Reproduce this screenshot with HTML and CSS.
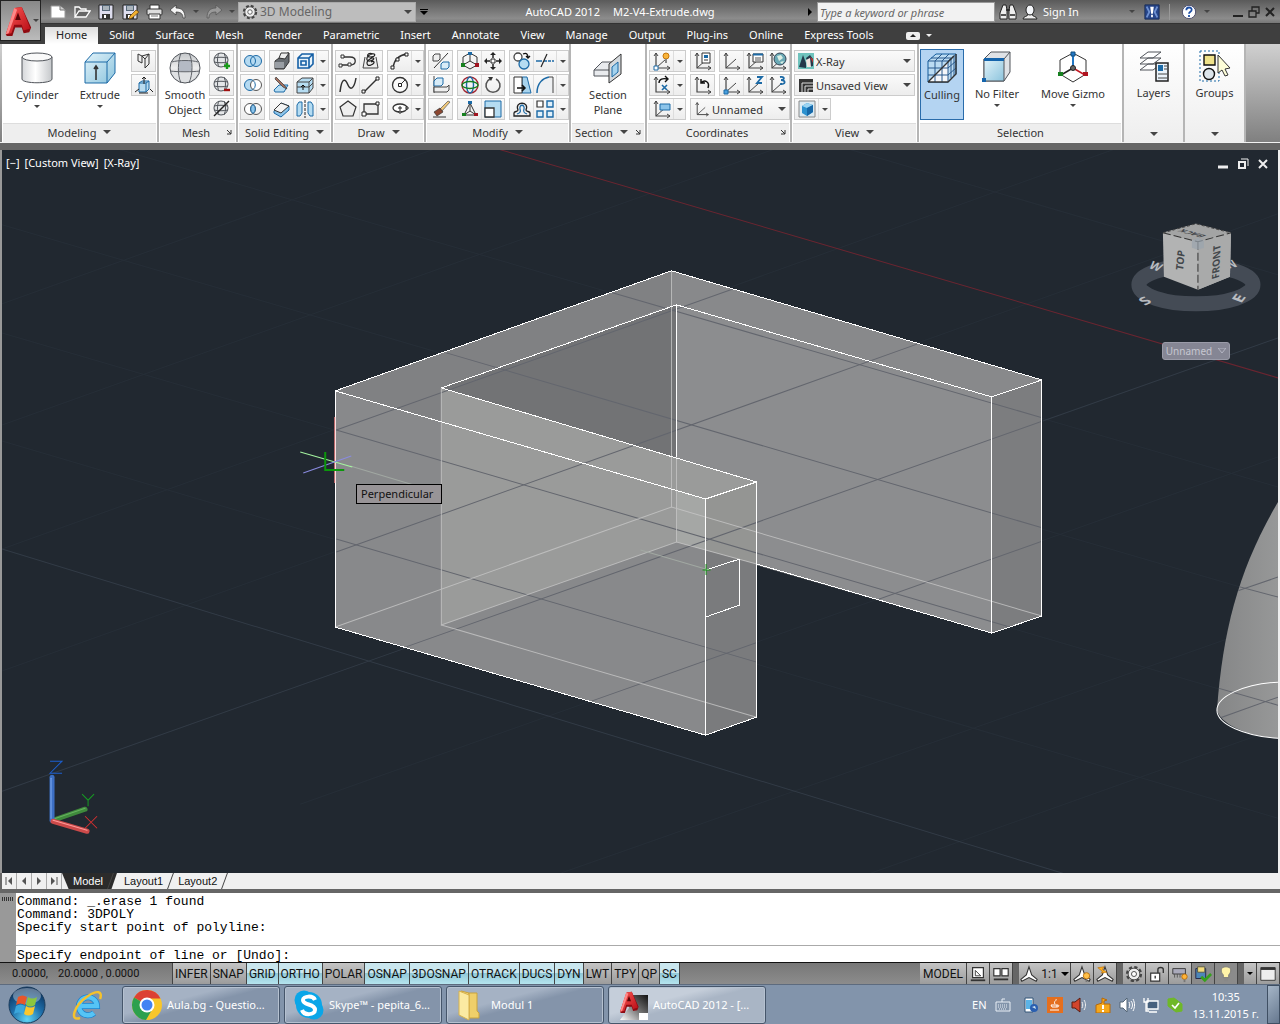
FILE: index.html
```html
<!DOCTYPE html>
<html lang="en">
<head>
    <meta charset="utf-8">
    <title>AutoCAD 2012</title>
    <link rel="stylesheet" href="styles.css">
</head>
<body>
<svg class="sprite" aria-hidden="true">
    <defs>
        <linearGradient id="g-metal" x1="0" x2="1"><stop offset="0" stop-color="#d5d7da"/><stop offset=".45" stop-color="#fff"/><stop offset="1" stop-color="#c4c7ca"/></linearGradient>
        <linearGradient id="g-sky" x1="0" y1="0" x2="1" y2="1"><stop offset="0" stop-color="#e2f3fa"/><stop offset="1" stop-color="#8cc4dd"/></linearGradient>
        <linearGradient id="g-ball" x1="0" y1="0" x2="0" y2="1"><stop offset="0" stop-color="#c4c7ca"/><stop offset=".5" stop-color="#eee"/><stop offset="1" stop-color="#b4b7ba"/></linearGradient>
        <radialGradient id="g-orb" cx=".5" cy=".9" r=".9"><stop offset="0" stop-color="#5fd5f5"/><stop offset=".5" stop-color="#1d6da8"/><stop offset="1" stop-color="#0b2c55"/></radialGradient>
        <linearGradient id="g-red" x1="0" y1="0" x2="1" y2="1"><stop offset="0" stop-color="#ff5a55"/><stop offset="1" stop-color="#b50a14"/></linearGradient>
        <linearGradient id="g-chrome" x1="0" y1="1" x2="1" y2="0"><stop offset="0" stop-color="#fff"/><stop offset=".5" stop-color="#777"/><stop offset="1" stop-color="#111"/></linearGradient>
    </defs>

    <!-- application marks -->
    <symbol id="acad" viewBox="0 0 32 34"><path d="M4 33 3 31 13 3l7-1 10 22-2 5-6 1-2-6h-7l-3 9z" fill="#8f0a10"/><path d="M3 31 12 3l8-1 9 23-7 2-2-6h-8l-3 9z" fill="url(#g-red)"/><path d="M13 16l3-8 3 8z" fill="#5a0508"/><path d="M12 3l3 2-9 25-3 1z" fill="#f88"/></symbol>
    <symbol id="acadfile" viewBox="0 0 32 32"><path d="M12 6h19v25H3l9-12z" fill="url(#g-chrome)"/><path d="M22 24h9v7h-9z" fill="#fff"/><svg x="1" y="0" width="22" height="26"><use href="#acad"/></svg></symbol>

    <!-- quick access -->
    <symbol id="new" viewBox="0 0 18 16"><path d="M2 2h9l5 4v8H2z" fill="#fff" stroke="#999"/><path d="M11 2v4h5" fill="#ccc" stroke="#777"/></symbol>
    <symbol id="open" viewBox="0 0 18 16"><path d="M2 13V3h4l2 2h5v2M2 13l4-6h11l-4 6z" fill="#666" stroke="#fff" stroke-width="1.300"/></symbol>
    <symbol id="save" viewBox="0 0 18 16"><path d="M2 1h14v14H2z" fill="#dde" stroke="#222"/><path d="M5 1h8v6H5z" fill="#567"/><path d="M6 3h6M6 5h6" stroke="#fff"/><path d="M5 10h8v5H5z" fill="#333"/><path d="M7 11h2v3H7z" fill="#fff"/></symbol>
    <symbol id="saveas" viewBox="0 0 18 16"><use href="#save"/><path d="M8 15l1-3 6-6 3 2-7 6z" fill="#f1b02f" stroke="#6b4512" stroke-width=".7"/></symbol>
    <symbol id="print" viewBox="0 0 18 16"><path d="M5 1h9v5H5z" fill="#fff" stroke="#333"/><rect x="2" y="5" width="15" height="6" rx="1" fill="#ddd" stroke="#333"/><path d="M4 10h11v5H4z" fill="#fff" stroke="#333"/><path d="M6 12h7" stroke="#777"/></symbol>
    <symbol id="undo" viewBox="0 0 18 16"><path d="M1 6l6-5v3c6 0 9 3 9 10h-2c0-4-2-6-7-6v3z" fill="#f4f4f4" stroke="#333" stroke-width=".7"/></symbol>
    <symbol id="redo" viewBox="0 0 18 16"><path d="M17 6l-6-5v3c-6 0-9 3-9 10h2c0-4 2-6 7-6v3z" fill="#999" stroke="#555" stroke-width=".7"/></symbol>
    <symbol id="gear" viewBox="0 0 20 20"><circle cx="10" cy="10" r="7.500" fill="none" stroke="#444" stroke-width="3" stroke-dasharray="3.500 2.400"/><circle cx="10" cy="10" r="6.500" fill="#eee" stroke="#444"/><circle cx="10" cy="10" r="2.800" fill="#fff" stroke="#444"/></symbol>
    <symbol id="find" viewBox="0 0 18 16"><path d="M4 1h3l1 5v9H1V9zM14 1h-3l-1 5v9h7V9z" fill="#eee" stroke="#222"/><path d="M7 6h4M2 11h5M11 11h5" stroke="#222" stroke-width="1.600"/></symbol>
    <symbol id="user" viewBox="0 0 18 16"><path d="M2 15c0-3 5-2 5-5h4c0 3 5 2 5 5z" fill="#eee" stroke="#222"/><ellipse cx="9" cy="6" rx="4" ry="5" fill="#f4f6fa" stroke="#222"/></symbol>
    <symbol id="exchange" viewBox="0 0 18 18"><path d="M1 1h16v16H1z" fill="#27468a" stroke="#162a55"/><path d="M3 3l3 6-3 6M15 3l-3 6 3 6" fill="none" stroke="#6f92d2" stroke-width="2"/><path d="M7 3h4l-1 8H8zM8 12h2v3H8z" fill="#fff"/></symbol>
    <symbol id="help" viewBox="0 0 18 18"><circle cx="9" cy="9" r="7.500" fill="#fff" stroke="#446"/><path d="M6 7c0-4 6-4 6-.5C12 9 9 8.500 9 11M9 12.500v2" fill="none" stroke="#1d4fa5" stroke-width="2"/></symbol>

    <!-- large ribbon icons -->
    <symbol id="cylinder" viewBox="0 0 32 32"><path d="M1 5v22c0 5 30 5 30 0V5" fill="url(#g-metal)" stroke="#50545a"/><ellipse cx="16" cy="5" rx="15" ry="4" fill="#fafafa" stroke="#50545a"/></symbol>
    <symbol id="extrude" viewBox="0 0 32 32"><path d="M1 10 9 1h22v20l-8 10H1z" fill="url(#g-sky)" stroke="#1c6aa6"/><path d="M1 10h22l8-9M23 10v21" fill="none" stroke="#1c6aa6"/><path d="M12 28V14m-2 3 2-3 2 3" fill="none" stroke="#333" stroke-width="1.600"/></symbol>
    <symbol id="smooth" viewBox="0 0 32 32"><circle cx="16" cy="16" r="15" fill="url(#g-ball)"/><path d="M10 9c4-1 8-1 12 0l1 10c-5 1-9 1-14 0z" fill="#b4bac4"/><path d="M1 19c8 1 22 1 30 0 0 16-28 16-30 0z" fill="#dfe1e3"/><circle cx="16" cy="16" r="15" fill="none" stroke="#50545a"/><path d="M3 10c6-2 20-2 26 0M1 19c8 1 22 1 30 0M12 1c-3 8-4 21 0 30M20 1c4 8 4 21 0 30" fill="none" stroke="#60646a"/></symbol>
    <symbol id="section" viewBox="0 0 32 32"><path d="M2 18l8-8h12v14H2z" fill="#e9ebee" stroke="#50545a"/><path d="M2 18h15" stroke="#50545a"/><path d="M17 12 29 2v20L17 31z" fill="#d6dade" stroke="#333"/><path d="M20 15l6-5v10l-6 5z" fill="#a4d2ee" stroke="#1c6aa6"/></symbol>
    <symbol id="culling" viewBox="0 0 32 32"><path d="M2 9l8-7h20v20l-8 8H2z" fill="#bcdcf2" stroke="#125c9d"/><path d="M2 30 22 10v20z" fill="#f5f7fa"/><path d="M2 9h20l8-7M22 9v21M9 9v21M16 9v21M2 16h20l8-7M2 23h20l8-7M5 6h20v20M9 9l7-7M16 9l7-7M28 4v20" fill="none" stroke="#28598c"/><path d="M2 30h20l8-8V2M2 30 28 4" fill="none" stroke="#333" stroke-width="1.400"/></symbol>
    <symbol id="nofilter" viewBox="0 0 32 32"><path d="M3 8 10 1h19v20l-6 9H3z" fill="#dfe2e6" stroke="#50545a"/><path d="M3 8h20v22H3z" fill="url(#g-sky)" stroke="#50545a"/><path d="M23 8l6-7" stroke="#50545a"/><path d="M3 7h20v3H3zM1 27h4v4H1z" fill="#1464ac"/></symbol>
    <symbol id="gizmo" viewBox="0 0 32 32"><path d="M16 2 29 9v14l-13 8L3 23V9z" fill="#fff" stroke="#333"/><path d="M16 17V4" stroke="#2277c4" stroke-width="2"/><path d="M16 17 4 24" stroke="#222" stroke-width="1.500"/><path d="M16 17l12 7" stroke="#c11a25" stroke-width="1.500"/><path d="M14 1h4v4h-4z" fill="#2277c4" stroke="#15507f"/><path d="M1 21h5v4H1z" fill="#178020"/><path d="M26 21h5v4h-5z" fill="#b01420"/><circle cx="16" cy="17" r="2.500" fill="#666" stroke="#222"/></symbol>
    <symbol id="layers" viewBox="0 0 32 32"><path d="M2 20l8-6h13l-8 6zM2 14l8-6h13l-8 6zM2 8l8-6h13l-8 6z" fill="#fff" stroke="#50545a"/><path d="M18 13h12v18H18z" fill="#eaf3fa" stroke="#222" stroke-width="1.500"/><path d="M20 15h5v6h-5z" fill="#1c6aa6"/><path d="M26 16h3M26 19h3M20 24h9M20 28h9" stroke="#444"/></symbol>
    <symbol id="groups" viewBox="0 0 32 32"><path d="M1 1h19v30H1z" fill="none" stroke="#1c6aa6" stroke-dasharray="2 2"/><path d="M5 5h11v10H5z" fill="#efe28a" stroke="#111" stroke-width="1.400"/><circle cx="10" cy="24" r="5.500" fill="#dce4ea" stroke="#111" stroke-width="1.400"/><path d="M19 5v18l4-3 3 6 3-1-3-6 5-1z" fill="#fdfdd8" stroke="#333"/></symbol>

    <!-- small ribbon icons -->
    <symbol id="polysolid" viewBox="0 0 20 20"><path d="M4 3l4 2v7l-4-2zM8 5l7-2v10l-4 4V8zM11 8l4-5" fill="#eee" stroke="#333"/></symbol>
    <symbol id="presspull" viewBox="0 0 20 20"><path d="M5 8l3-2h7v8l-3 3H5z" fill="#b9dcf0" stroke="#1c6aa6"/><path d="M5 8h7l3-2M12 8v9" fill="none" stroke="#1c6aa6"/><path d="M10 9V2M8 4l2-2 2 2M1 17l4-3M16 14l3 3M5 18h9" fill="none" stroke="#222"/></symbol>
    <symbol id="meshball" viewBox="0 0 20 20"><circle cx="9" cy="9" r="7" fill="#e4e6e8" stroke="#50545a"/><path d="M2 7c4-1 10-1 14 0M2 11c4 1 10 1 14 0M7 2c-2 4-2 10 0 14M12 2c2 4 2 10 0 14" fill="none" stroke="#50545a"/></symbol>
    <symbol id="meshmore" viewBox="0 0 20 20"><use href="#meshball"/><path d="M15 12v6M12 15h6" stroke="#189a18" stroke-width="2.400"/></symbol>
    <symbol id="meshless" viewBox="0 0 20 20"><use href="#meshball"/><path d="M12 15h6" stroke="#a01010" stroke-width="2.400"/></symbol>
    <symbol id="meshcut" viewBox="0 0 20 20"><use href="#meshball"/><path d="M2 17 17 2" stroke="#222" stroke-width="1.500"/></symbol>
    <symbol id="union" viewBox="0 0 20 20"><circle cx="7" cy="10" r="5.500" fill="#b5daf1"/><circle cx="13" cy="10" r="5.500" fill="#b5daf1" stroke="#1c6aa6"/><circle cx="7" cy="10" r="5.500" fill="none" stroke="#1c6aa6"/></symbol>
    <symbol id="subtract" viewBox="0 0 20 20"><circle cx="7" cy="10" r="5.500" fill="#b5daf1" stroke="#1c6aa6"/><circle cx="13" cy="10" r="5.500" fill="#fff" stroke="#555"/><path d="M10 5.500a5.500 5.500 0 0 1 0 9" fill="none" stroke="#1c6aa6"/></symbol>
    <symbol id="intersect" viewBox="0 0 20 20"><circle cx="7" cy="10" r="5.500" fill="#fff" stroke="#555"/><circle cx="13" cy="10" r="5.500" fill="none" stroke="#555"/><path d="M10 5.500a5.500 5.500 0 0 1 0 9 5.500 5.500 0 0 1 0-9" fill="#8cc4ea" stroke="#1c6aa6"/></symbol>
    <symbol id="taper" viewBox="0 0 20 20"><path d="M3 10l4-3h5l3-5h2v9l-5 7H3z" fill="#666b70" stroke="#333"/><path d="M7 7l2-5h8l-4 6z" fill="#eee" stroke="#333"/><path d="M3 11h9v6H3z" fill="#999ea4"/></symbol>
    <symbol id="cube" viewBox="0 0 20 20"><path d="M3 7l4-4h11v10l-4 4H3zM3 7h11v10M14 7l4-4M6 10h5v4H6z" fill="#e7f3fb" stroke="#155fa5" stroke-width="1.600"/></symbol>
    <symbol id="slice" viewBox="0 0 20 20"><path d="M2 15l5-5h9l-4 7H3z" fill="#b5dcf2" stroke="#1c6aa6"/><path d="M4 2l9 9 2 3-4-2-8-8z" fill="#a46e5c" stroke="#444" stroke-width=".8"/></symbol>
    <symbol id="thicken" viewBox="0 0 20 20"><path d="M2 7l5-4h11v10l-4 5H2z" fill="#b5dcf2" stroke="#444"/><path d="M2 7h12l4-4M14 7v11M2 12h12l4-4" fill="none" stroke="#444"/><path d="M8 15v-5M6 12l2-2 2 2" fill="none" stroke="#111"/></symbol>
    <symbol id="shell" viewBox="0 0 20 20"><path d="M2 12l7-8 8 3v4l-8 7-7-4z" fill="#8cc4ea" stroke="#1c6aa6"/><path d="M2 11l7-7 8 3-8 7z" fill="#f4f4f4" stroke="#333"/></symbol>
    <symbol id="mirror3" viewBox="0 0 20 20"><path d="M2 6l2-3h3v11l-2 3H2zM13 3h3l2 3v11h-3l-2-3z" fill="#b5dcf2" stroke="#1c6aa6"/><path d="M10 1v18" stroke="#222" stroke-dasharray="3 1"/></symbol>
    <symbol id="polyline" viewBox="0 0 20 20"><path d="M2 14h9M4 6h8c7 0 7 8 0 8" fill="none" stroke="#333" stroke-width="1.300"/><path d="M1 13h3v3H1zM3 4h3v3H3zM10 12h3v3h-3z" fill="#fff" stroke="#333"/></symbol>
    <symbol id="helix" viewBox="0 0 20 20"><path d="M4 6 2 17h15L15 6" fill="#eee" stroke="#444"/><path d="M12 3C6 1 5 6 9 6c6 0 6-4 2-3C4 5 5 11 9 10c6-1 4-5 0-2-5 3-3 8 1 6 5-2 3-5 0-3" fill="none" stroke="#222" stroke-width="1.200"/></symbol>
    <symbol id="arc" viewBox="0 0 20 20"><path d="M3 17C4 9 9 4 17 3" fill="none" stroke="#333" stroke-width="1.400"/><path d="M1 15h3v3H1zM6 7h3v3H6zM15 2h3v3h-3z" fill="#fff" stroke="#222"/></symbol>
    <symbol id="spline" viewBox="0 0 20 20"><path d="M2 17C4 0 8 5 10 10s6 5 8-7" fill="none" stroke="#333" stroke-width="1.500"/></symbol>
    <symbol id="line" viewBox="0 0 20 20"><path d="M3 17 17 3" stroke="#333" stroke-width="1.400"/><path d="M1 15h3v3H1zM15 2h3v3h-3z" fill="#fff" stroke="#222"/></symbol>
    <symbol id="circle" viewBox="0 0 20 20"><circle cx="10" cy="10" r="7.500" fill="#fafafa" stroke="#333" stroke-width="1.300"/><path d="M10 10l5-5" stroke="#333"/><path d="M8.500 8.500h3v3h-3z" fill="#fff" stroke="#222"/></symbol>
    <symbol id="polygon" viewBox="0 0 20 20"><path d="M10 2l8 6-3 9H5L2 8z" fill="#eee" stroke="#333" stroke-width="1.200"/></symbol>
    <symbol id="rect" viewBox="0 0 20 20"><path d="M3 5h14v10H3z" fill="#eee" stroke="#333" stroke-width="1.300"/><path d="M1 13h4v4H1zM15 3h3v3h-3z" fill="#fff" stroke="#222"/></symbol>
    <symbol id="ellipse" viewBox="0 0 20 20"><ellipse cx="10" cy="9" rx="7" ry="4" fill="#fff" stroke="#333" stroke-width="1.300"/><path d="M8 9h4M10 7v4" stroke="#222"/><path d="M9 12h2v2H9zM16 8h2v2h-2z" fill="#fff" stroke="#222"/></symbol>
    <symbol id="align3" viewBox="0 0 20 20"><path d="M2 5l2-2h5v5L7 10H2z" fill="#eee" stroke="#444"/><path d="M10 13l2-2h6v5l-2 2h-6z" fill="#d8ecf8" stroke="#1c6aa6"/><path d="M3 17 17 2" stroke="#333"/></symbol>
    <symbol id="move3" viewBox="0 0 20 20"><path d="M10 2l7 4v8l-7 4-7-4V6zM10 10V3M10 10l-7 4M10 10l7 4" fill="none" stroke="#333"/><path d="M8 1h4v3H8z" fill="#1c6aa6"/><path d="M1 12h4v4H1z" fill="#178020"/><path d="M15 12h4v4h-4z" fill="#a01420"/></symbol>
    <symbol id="move" viewBox="0 0 20 20"><path d="M10 3v14M3 10h14" stroke="#222" stroke-width="1.500" stroke-dasharray="4 1"/><path d="M10 1l3 3H7zM10 19l3-3H7zM1 10l3-3v6zM19 10l-3-3v6z" fill="#222"/><path d="M8 8h4v4H8z" fill="#fff" stroke="#222"/></symbol>
    <symbol id="copy" viewBox="0 0 20 20"><circle cx="6" cy="6" r="4" fill="#fff" stroke="#444" stroke-width="1.300"/><circle cx="12" cy="13" r="5" fill="#b5dcf2" stroke="#1c6aa6" stroke-width="1.300"/><path d="M11 3c4-2 5 1 5 4M14 5l2 2 2-2" fill="none" stroke="#111" stroke-width="1.300"/></symbol>
    <symbol id="trim" viewBox="0 0 20 20"><path d="M1 10h6" stroke="#1c6aa6" stroke-width="1.500"/><path d="M9 10h10" stroke="#1c6aa6" stroke-width="1.500" stroke-dasharray="3 1"/><path d="M6 16 12 3" stroke="#222" stroke-width="1.200"/></symbol>
    <symbol id="alignbox" viewBox="0 0 20 20"><path d="M3 1v17" stroke="#444"/><path d="M3 6l3-3h6v6l-2 2H3z" fill="#d8ecf8" stroke="#1c6aa6"/><path d="M3 12h13l2-2v5l-2 2H3z" fill="#eee" stroke="#444"/></symbol>
    <symbol id="rotate3" viewBox="0 0 20 20"><circle cx="10" cy="10" r="8" fill="none" stroke="#a02530" stroke-width="1.400"/><ellipse cx="10" cy="10" rx="3.500" ry="8" fill="none" stroke="#1c6aa6" stroke-width="1.400"/><ellipse cx="10" cy="10" rx="8" ry="3.500" fill="none" stroke="#178020" stroke-width="1.400"/></symbol>
    <symbol id="rotate" viewBox="0 0 20 20"><path d="M13 4a7 7 0 1 1-6 0" fill="none" stroke="#555" stroke-width="1.600"/><path d="M5 2h5l-2 4z" fill="#333"/></symbol>
    <symbol id="stretch" viewBox="0 0 20 20"><path d="M10 2h5l4 16h-9z" fill="#a8d4ee" stroke="#1c6aa6"/><path d="M2 2h8v16H2z" fill="#fff" stroke="#333"/><path d="M5 13h7M10 10l3 3-3 3" fill="none" stroke="#111" stroke-width="1.500"/></symbol>
    <symbol id="fillet" viewBox="0 0 20 20"><path d="M2 18C2 8 8 3 18 2v16z" fill="#eef0f2"/><path d="M2 18C2 8 8 3 14 2" fill="none" stroke="#1c6aa6" stroke-width="1.500"/><path d="M14 2h4v16" fill="none" stroke="#444"/></symbol>
    <symbol id="erase" viewBox="0 0 20 20"><path d="M17 2 9 10l2 2 8-9z" fill="#f0c878" stroke="#555" stroke-width=".7"/><path d="M9 9l-6 4 3 4 6-4z" fill="#8b4630" stroke="#333" stroke-width=".7"/><path d="M2 18h13" stroke="#333"/></symbol>
    <symbol id="scale3" viewBox="0 0 20 20"><path d="M10 4 4 16h12zM10 12V4M10 12l-6 4M10 12l6 4" fill="none" stroke="#333"/><path d="M8 2h4v3H8z" fill="#1c6aa6"/><path d="M2 14h4v3H2z" fill="#178020"/><path d="M14 14h4v3h-4z" fill="#a01420"/></symbol>
    <symbol id="scale" viewBox="0 0 20 20"><path d="M2 2h16v16H2z" fill="#b5dcf2" stroke="#1c6aa6"/><path d="M2 9h9v9H2z" fill="#fff" stroke="#333" stroke-width="1.300"/></symbol>
    <symbol id="offset" viewBox="0 0 20 20"><path d="M2 17v-3c0-2 4-1 4-3-4-9 12-9 8 0 0 2 4 1 4 3v3z" fill="none" stroke="#222" stroke-width="1.300"/><path d="M5 15c3-1 4-2 3-5-1-5 5-5 4 0-1 3 0 4 3 5" fill="none" stroke="#1c6aa6" stroke-width="1.300"/></symbol>
    <symbol id="array" viewBox="0 0 20 20"><path d="M2 2h6v6H2z" fill="#fff" stroke="#333" stroke-width="1.200"/><path d="M12 2h6v6h-6zM2 12h6v6H2zM12 12h6v6h-6z" fill="#e0f0fa" stroke="#1c6aa6" stroke-width="1.400"/></symbol>
    <symbol id="axes" viewBox="0 0 20 20"><path d="M4 2v15h14" fill="none" stroke="#444" stroke-width="1.200"/><path d="M2 5l2-3 2 3M15 15l3 2-3 2" fill="none" stroke="#444"/></symbol>
    <symbol id="ucs" viewBox="0 0 20 20"><use href="#axes"/><path d="M4 17 14 8" stroke="#444"/></symbol>
    <symbol id="ucsicon" viewBox="0 0 20 20"><use href="#ucs"/><path d="M2 15h4v4H2z" fill="#fff" stroke="#1c6aa6"/><circle cx="14" cy="5" r="3" fill="#f9b43a" stroke="#c5780e"/><path d="M13 8h2v4h-2z" fill="#888"/></symbol>
    <symbol id="ucsx" viewBox="0 0 20 20"><use href="#axes"/><path d="M7 8c0-4 4-5 8-4M13 1l3 3-3 3" fill="none" stroke="#111" stroke-width="1.400"/><path d="M10 10l5 5M15 10l-5 5" stroke="#1c6aa6" stroke-width="1.600"/></symbol>
    <symbol id="ucsview" viewBox="0 0 20 20"><use href="#ucs"/><path d="M8 5h10v6H8z" fill="#8cc4ea" stroke="#1c6aa6"/></symbol>
    <symbol id="ucsnamed" viewBox="0 0 20 20"><use href="#ucs"/><path d="M9 2h8v10H9z" fill="#fff" stroke="#333"/><path d="M11 4h4v3h-4z" fill="#1c6aa6"/><path d="M11 9h4" stroke="#333"/></symbol>
    <symbol id="ucsprev" viewBox="0 0 20 20"><use href="#axes"/><path d="M8 8c4-4 9-1 7 5M8 4v4h4" fill="none" stroke="#111" stroke-width="1.500"/></symbol>
    <symbol id="ucslist" viewBox="0 0 20 20"><use href="#ucs"/><path d="M8 3h10v8H8z" fill="#fff" stroke="#333"/><path d="M8 3.500h10" stroke="#1c6aa6" stroke-width="2"/><path d="M10 7h6M10 9h6" stroke="#555"/></symbol>
    <symbol id="ucsworld" viewBox="0 0 20 20"><use href="#ucs"/><circle cx="12" cy="8" r="6" fill="#6aa9b5" stroke="#345"/><path d="M9 5l4-1 2 3-4 3zM12 11l4-1-2 3z" fill="#dcefe5"/></symbol>
    <symbol id="ucsorigin" viewBox="0 0 20 20"><use href="#ucs"/><path d="M2 15h4v4H2z" fill="#4aa0de" stroke="#1c6aa6"/></symbol>
    <symbol id="ucsz" viewBox="0 0 20 20"><use href="#ucs"/><path d="M12 2h5l-5 6h5" fill="none" stroke="#1c6aa6" stroke-width="1.800"/></symbol>
    <symbol id="ucs3" viewBox="0 0 20 20"><use href="#ucs"/><path d="M12 2c5-1 5 3 1 3 5 0 5 5-1 4" fill="none" stroke="#1c6aa6" stroke-width="1.800"/></symbol>
    <symbol id="xray" viewBox="0 0 16 16"><path d="M0 0h16v16H0z" fill="#6fc3bd"/><path d="M1 14 5 2l3 8v5zM8 5l4-3 3 4v7l-4 1z" fill="#24384a"/><path d="M8 7l4-2 1 9H9z" fill="#f2e6e2"/><path d="M12 4l3 2v4z" fill="#c03030"/></symbol>
    <symbol id="saved" viewBox="0 0 16 16"><path d="M1 2h14v13H1z" fill="#333"/><path d="M4 15V6h11M7 15V9h8M10 15v-3h5" fill="none" stroke="#ddd"/></symbol>
    <symbol id="viewcube" viewBox="0 0 20 20"><path d="M2 2h16v16H2z" fill="#dbeaf2" stroke="#888"/><path d="M5 7l5-3 6 2v7l-6 4-5-3z" fill="#2b91cf"/><path d="M5 7l5 2 6-3-6-2z" fill="#9bd4f2"/><path d="M10 9v8l6-4V6z" fill="#1668a8"/></symbol>

    <!-- status bar icons -->
    <symbol id="st-model" viewBox="0 0 20 20"><path d="M4 3h12v11H4z" fill="#fff" stroke="#333" stroke-width="1.300"/><path d="M7 6v6h6z" fill="none" stroke="#333"/><path d="M2 17h16" stroke="#333" stroke-width="2"/></symbol>
    <symbol id="st-quick" viewBox="0 0 20 20"><path d="M2 4h7v8H2zM11 4h7v8h-7z" fill="#fff" stroke="#333" stroke-width="1.300"/><path d="M2 16h16" stroke="#333" stroke-width="2"/></symbol>
    <symbol id="st-scale" viewBox="0 0 20 20"><path d="M10 2l3 9 6 5-1 2-8-4-8 4-1-2 6-5z" fill="#fff" stroke="#333" stroke-width="1.200"/></symbol>
    <symbol id="st-vis" viewBox="0 0 20 20"><use href="#st-scale"/><circle cx="15" cy="12" r="3.500" fill="#ffc04a" stroke="#b86c08"/><path d="M14 16h2v3h-2z" fill="#777"/></symbol>
    <symbol id="st-auto" viewBox="0 0 20 20"><use href="#st-scale"/><path d="M2 3l7-1-2 3 5 3-6 1 1-2z" fill="#ffb020" stroke="#b86c08" stroke-width=".7"/></symbol>
    <symbol id="st-lock" viewBox="0 0 20 20"><path d="M3 9h10v9H3z" fill="#fff" stroke="#333" stroke-width="1.300"/><path d="M11 9V5c0-3 6-3 6 0v4M8 12v3" fill="none" stroke="#333" stroke-width="1.500"/></symbol>
    <symbol id="st-chip" viewBox="0 0 20 20"><path d="M2 4h14v6H2z" fill="#aab" stroke="#333"/><path d="M4 10v4M7 10v4M10 10v4" stroke="#555"/><circle cx="15" cy="13" r="3" fill="#ffb43a" stroke="#b86c08"/><path d="M14 16h2v3h-2z" fill="#777"/></symbol>
    <symbol id="st-perf" viewBox="0 0 20 20"><path d="M2 4h11v11H2z" fill="#4d86b8" stroke="#224"/><path d="M4 2h8v6H4z" fill="#f2db7c" stroke="#554"/><path d="M8 13l4 4 7-7" fill="none" stroke="#36a01c" stroke-width="3"/></symbol>
    <symbol id="st-bulb" viewBox="0 0 20 20"><path d="M10 2c7 0 6 6 3 9v3H7v-3C4 8 3 2 10 2z" fill="#fff3a8" stroke="#777"/><path d="M8 14h4v4H8z" fill="#888"/></symbol>
    <symbol id="st-clean" viewBox="0 0 20 20"><path d="M2 3h16v14H2z" fill="#eee" stroke="#333"/><path d="M2 4h16" stroke="#333" stroke-width="3"/></symbol>

    <!-- taskbar -->
    <symbol id="start" viewBox="0 0 38 38"><circle cx="19" cy="19" r="18" fill="url(#g-orb)" stroke="#1a3c5c"/><ellipse cx="19" cy="10" rx="14" ry="8" fill="#fff" opacity=".35"/><path d="M10 11c3-2 6-2 9 0l-2 8c-3-2-6-2-9 0z" fill="#e8562a"/><path d="M20 11c3 2 6 2 9 0l-2 8c-3 2-6 2-9 0z" fill="#8cc63f"/><path d="M8 20c3-2 6-2 9 0l-2 8c-3-2-6-2-9 0z" fill="#3ba7dc"/><path d="M18 20c3 2 6 2 9 0l-2 8c-3 2-6 2-9 0z" fill="#fbc72c"/></symbol>
    <symbol id="ie" viewBox="0 0 34 32"><path d="M9 17h17a9 9 0 1 0-3 7" fill="none" stroke="#1b83cf" stroke-width="6"/><path d="M9 17h17a9 9 0 1 0-3 7" fill="none" stroke="#55c4f6" stroke-width="4.500"/><path d="M9 29C-2 33 3 16 17 7c9-6 15-5 12 3" fill="none" stroke="#f5c22c" stroke-width="2.500"/></symbol>
    <symbol id="chrome" viewBox="0 0 32 32"><circle cx="16" cy="16" r="15" fill="#f8c62a"/><path d="M16 16 3 8.500A15 15 0 0 1 29.500 9.500H16z" fill="#dc4134"/><path d="M16 16 3 8.500A15 15 0 0 0 15 31l7-12z" fill="#2da04e"/><circle cx="16" cy="16" r="7.500" fill="#fff"/><circle cx="16" cy="16" r="5.500" fill="#4283f3"/></symbol>
    <symbol id="skype" viewBox="0 0 32 32"><circle cx="11" cy="11" r="9.500" fill="#0aa6e8"/><circle cx="21" cy="21" r="9.500" fill="#0aa6e8"/><circle cx="16" cy="16" r="13" fill="#0aa6e8"/><path d="M22 11c-2-5-12-4-12 0 0 6 12 3 12 10 0 5-11 6-13 0" fill="none" stroke="#fff" stroke-width="4"/></symbol>
    <symbol id="folder" viewBox="0 0 32 32"><path d="M6 2l8 2v24l-8-2z" fill="#f5d878" stroke="#c9a23c"/><path d="M14 4h8v18l2 2v5H14z" fill="#efcf6a" stroke="#c9a23c"/><path d="M4 2l10 4v25L4 26z" fill="#fbeaa2" stroke="#d7b24c"/></symbol>
    <symbol id="t-phone" viewBox="0 0 16 16"><path d="M2 1h8v14H2z" fill="#fff" stroke="#357"/><path d="M3 3h6v9H3z" fill="#5cb3e6"/><circle cx="11" cy="11" r="4" fill="#2a5fb0"/><path d="M9 10l3-1 1 3z" fill="#cfe6f5"/></symbol>
    <symbol id="t-java" viewBox="0 0 16 16"><path d="M0 0h16v16H0z" fill="#e56f1e"/><path d="M9 2c1 2-3 2-1 5M4 8h6v2H5zM10 8c3 0 2 2 0 2M3 13h9" fill="none" stroke="#fff"/></symbol>
    <symbol id="t-sound" viewBox="0 0 16 16"><path d="M1 5h3l5-4v14l-5-4H1z" fill="#d2452c" stroke="#5a1c10"/><path d="M11 5c1 2 1 4 0 6M13 3c2 3 2 7 0 10" fill="none" stroke="#eee"/></symbol>
    <symbol id="t-warn" viewBox="0 0 16 16"><path d="M1 8l6-2V1l5 2-3 1v3h6v9H1z" fill="#f5a81c" stroke="#b4680c"/><path d="M8 8v4M8 13v2" stroke="#fff" stroke-width="2"/></symbol>
    <symbol id="t-vol" viewBox="0 0 16 16"><path d="M1 5h3l4-4v14l-4-4H1z" fill="#fff" stroke="#567"/><path d="M10 5c1 2 1 4 0 6M12 4c2 2 2 6 0 8M14 2c2 4 2 8 0 12" fill="none" stroke="#fff"/></symbol>
    <symbol id="t-net" viewBox="0 0 16 16"><path d="M4 4h11v8H4z" fill="#47617d" stroke="#fff" stroke-width="1.300"/><path d="M6 15h8M1 1v4h4V1M3 5v9h3" fill="none" stroke="#fff" stroke-width="1.300"/></symbol>
    <symbol id="t-ok" viewBox="0 0 16 16"><path d="M1 2l6-1 8 6v7l-6 1-8-6z" fill="#6fb829" stroke="#6fb829" stroke-linejoin="round"/><path d="M5 8l3 3 4-5" fill="none" stroke="#fff" stroke-width="1.700"/></symbol>
    <symbol id="t-kbd" viewBox="0 0 16 16"><path d="M1 5h14v9H1zM7 5V2h3" fill="none" stroke="#e8eef5"/><path d="M3 8h10M3 10h10M4 12h8" stroke="#e8eef5" stroke-dasharray="1 1"/></symbol>
</svg>

<div class="app">
    <header class="top">
        <button class="app-button" aria-label="Application menu"><svg class="app-logo"><use href="#acad"/></svg><i class="caret small"></i></button>
        <div class="titlebar">
            <button class="quick" aria-label="New"><svg><use href="#new"/></svg></button>
            <button class="quick" aria-label="Open"><svg><use href="#open"/></svg></button>
            <button class="quick" aria-label="Save"><svg><use href="#save"/></svg></button>
            <button class="quick" aria-label="Save as"><svg><use href="#saveas"/></svg></button>
            <button class="quick" aria-label="Print"><svg><use href="#print"/></svg></button>
            <button class="quick with-caret" aria-label="Undo"><svg><use href="#undo"/></svg><i class="caret small"></i></button>
            <button class="quick with-caret" aria-label="Redo"><svg><use href="#redo"/></svg><i class="caret small"></i></button>
            <div class="combo workspace">
                <svg><use href="#gear"/></svg>
                <select aria-label="Workspace"><option>3D Modeling</option></select>
                <i class="caret"></i>
            </div>
            <button class="quick-menu" aria-label="Customize toolbar"><i class="bar"></i><i class="caret dark"></i></button>
            <div class="window-title"><span>AutoCAD 2012</span><span>M2-V4-Extrude.dwg</span></div>
            <i class="caret-right"></i>
            <input class="search" type="search" aria-label="Search" placeholder="Type a keyword or phrase">
            <button class="info" aria-label="Find"><svg><use href="#find"/></svg></button>
            <button class="sign-in"><svg><use href="#user"/></svg>Sign In<i class="caret small"></i></button>
            <button class="info" aria-label="Exchange"><svg><use href="#exchange"/></svg></button>
            <button class="info help" aria-label="Help"><svg><use href="#help"/></svg><i class="caret small"></i></button>
            <div class="window-buttons">
                <button aria-label="Minimize"><svg viewBox="0 0 12 12"><path d="M1 10h10" stroke="#222" stroke-width="2"/></svg></button>
                <button aria-label="Restore"><svg viewBox="0 0 12 12"><path d="M1 5h7v6H1zM4 5V1h7v6H8" fill="none" stroke="#222" stroke-width="1.300"/></svg></button>
                <button aria-label="Close"><svg viewBox="0 0 12 12"><path d="M2 2l8 8M10 2l-8 8" stroke="#222" stroke-width="2"/></svg></button>
            </div>
        </div>
        <nav class="tabs">
            <a class="tab active" href="#home">Home</a>
            <a class="tab" href="#solid">Solid</a>
            <a class="tab" href="#surface">Surface</a>
            <a class="tab" href="#mesh">Mesh</a>
            <a class="tab" href="#render">Render</a>
            <a class="tab" href="#parametric">Parametric</a>
            <a class="tab" href="#insert">Insert</a>
            <a class="tab" href="#annotate">Annotate</a>
            <a class="tab" href="#view">View</a>
            <a class="tab" href="#manage">Manage</a>
            <a class="tab" href="#output">Output</a>
            <a class="tab" href="#plugins">Plug-ins</a>
            <a class="tab" href="#online">Online</a>
            <a class="tab" href="#express">Express Tools</a>
            <button class="collapse" aria-label="Minimize ribbon"><svg viewBox="0 0 14 8"><rect width="14" height="8" rx="2" fill="#eee"/><path d="M4 5l3-3 3 3z" fill="#222"/></svg><i class="caret small light"></i></button>
        </nav>
    </header>

    <main class="ribbon">
        <section class="panel modeling">
            <div class="panel-body">
                <button class="big"><svg><use href="#cylinder"/></svg>Cylinder<i class="caret small"></i></button>
                <button class="big"><svg><use href="#extrude"/></svg>Extrude<i class="caret small"></i></button>
                <div class="rows">
                    <div class="row"><div class="group"><button aria-label="Polysolid"><svg><use href="#polysolid"/></svg></button></div></div>
                    <div class="row"><div class="group"><button aria-label="Presspull"><svg><use href="#presspull"/></svg></button></div></div>
                </div>
            </div>
            <h2>Modeling<i class="caret"></i></h2>
        </section>

        <section class="panel mesh">
            <div class="panel-body">
                <button class="big">
                    <svg><use href="#smooth"/></svg>Smooth<br>Object</button>
                <div class="rows">
                    <div class="row"><div class="group"><button aria-label="Smooth more"><svg><use href="#meshmore"/></svg></button></div></div>
                    <div class="row"><div class="group"><button aria-label="Smooth less"><svg><use href="#meshless"/></svg></button></div></div>
                    <div class="row"><div class="group"><button aria-label="Refine mesh"><svg><use href="#meshcut"/></svg></button></div></div>
                </div>
            </div>
            <h2>Mesh<svg class="launcher" viewBox="0 0 6 6"><path d="M1 1l4 4M5 1v4H1" fill="none" stroke="#333"/></svg></h2>
        </section>

        <section class="panel editing">
            <div class="panel-body">
                <div class="rows">
                    <div class="row">
                        <div class="group"><button aria-label="Union"><svg><use href="#union"/></svg></button></div>
                        <div class="group"><button aria-label="Taper faces"><svg><use href="#taper"/></svg></button><button aria-label="Extract edges"><svg><use href="#cube"/></svg></button><button class="drop" aria-label="More edges"><i class="caret small"></i></button></div>
                    </div>
                    <div class="row">
                        <div class="group"><button aria-label="Subtract"><svg><use href="#subtract"/></svg></button></div>
                        <div class="group"><button aria-label="Slice"><svg><use href="#slice"/></svg></button><button aria-label="Extrude faces"><svg><use href="#thicken"/></svg></button><button class="drop" aria-label="More faces"><i class="caret small"></i></button></div>
                    </div>
                    <div class="row">
                        <div class="group"><button aria-label="Intersect"><svg><use href="#intersect"/></svg></button></div>
                        <div class="group"><button aria-label="Thicken"><svg><use href="#shell"/></svg></button><button aria-label="Separate"><svg><use href="#mirror3"/></svg></button><button class="drop" aria-label="More bodies"><i class="caret small"></i></button></div>
                    </div>
                </div>
            </div>
            <h2>Solid Editing<i class="caret"></i></h2>
        </section>

        <section class="panel draw">
            <div class="panel-body">
                <div class="rows">
                    <div class="row">
                        <div class="group"><button aria-label="Polyline"><svg><use href="#polyline"/></svg></button><button aria-label="Helix"><svg><use href="#helix"/></svg></button></div>
                        <div class="group"><button aria-label="Arc"><svg><use href="#arc"/></svg></button><button class="drop" aria-label="More arcs"><i class="caret small"></i></button></div>
                    </div>
                    <div class="row">
                        <div class="group"><button aria-label="Spline"><svg><use href="#spline"/></svg></button><button aria-label="Line"><svg><use href="#line"/></svg></button></div>
                        <div class="group"><button aria-label="Circle"><svg><use href="#circle"/></svg></button><button class="drop" aria-label="More circles"><i class="caret small"></i></button></div>
                    </div>
                    <div class="row">
                        <div class="group"><button aria-label="Polygon"><svg><use href="#polygon"/></svg></button><button aria-label="Rectangle"><svg><use href="#rect"/></svg></button></div>
                        <div class="group"><button aria-label="Ellipse"><svg><use href="#ellipse"/></svg></button><button class="drop" aria-label="More ellipses"><i class="caret small"></i></button></div>
                    </div>
                </div>
            </div>
            <h2>Draw<i class="caret"></i></h2>
        </section>

        <section class="panel modify">
            <div class="panel-body">
                <div class="rows">
                    <div class="row">
                        <div class="group"><button aria-label="3D mirror"><svg><use href="#align3"/></svg></button></div>
                        <div class="group"><button aria-label="3D move"><svg><use href="#move3"/></svg></button><button aria-label="Move"><svg><use href="#move"/></svg></button></div>
                        <div class="group"><button aria-label="Copy"><svg><use href="#copy"/></svg></button><button aria-label="Trim"><svg><use href="#trim"/></svg></button><button class="drop" aria-label="More trim"><i class="caret small"></i></button></div>
                    </div>
                    <div class="row">
                        <div class="group"><button aria-label="3D align"><svg><use href="#alignbox"/></svg></button></div>
                        <div class="group"><button aria-label="3D rotate"><svg><use href="#rotate3"/></svg></button><button aria-label="Rotate"><svg><use href="#rotate"/></svg></button></div>
                        <div class="group"><button aria-label="Stretch"><svg><use href="#stretch"/></svg></button><button aria-label="Fillet"><svg><use href="#fillet"/></svg></button><button class="drop" aria-label="More fillet"><i class="caret small"></i></button></div>
                    </div>
                    <div class="row">
                        <div class="group"><button aria-label="Erase"><svg><use href="#erase"/></svg></button></div>
                        <div class="group"><button aria-label="3D scale"><svg><use href="#scale3"/></svg></button><button aria-label="Scale"><svg><use href="#scale"/></svg></button></div>
                        <div class="group"><button aria-label="Offset"><svg><use href="#offset"/></svg></button><button aria-label="Array"><svg><use href="#array"/></svg></button><button class="drop" aria-label="More arrays"><i class="caret small"></i></button></div>
                    </div>
                </div>
            </div>
            <h2>Modify<i class="caret"></i></h2>
        </section>

        <section class="panel section">
            <div class="panel-body">
                <button class="big"><svg><use href="#section"/></svg>Section<br>Plane</button>
            </div>
            <h2>Section<i class="caret"></i><svg class="launcher" viewBox="0 0 6 6"><path d="M1 1l4 4M5 1v4H1" fill="none" stroke="#333"/></svg></h2>
        </section>

        <section class="panel coordinates">
            <div class="panel-body">
                <div class="rows">
                    <div class="row">
                        <div class="group"><button aria-label="UCS icon"><svg><use href="#ucsicon"/></svg></button><button class="drop" aria-label="UCS icon options"><i class="caret small"></i></button></div>
                        <div class="group"><button aria-label="Named UCS"><svg><use href="#ucsnamed"/></svg></button></div>
                        <div class="group"><button aria-label="UCS"><svg><use href="#ucs"/></svg></button><button aria-label="UCS settings"><svg><use href="#ucslist"/></svg></button><button aria-label="World"><svg><use href="#ucsworld"/></svg></button></div>
                    </div>
                    <div class="row">
                        <div class="group"><button aria-label="Rotate X"><svg><use href="#ucsx"/></svg></button><button class="drop" aria-label="Rotate options"><i class="caret small"></i></button></div>
                        <div class="group"><button aria-label="Previous UCS"><svg><use href="#ucsprev"/></svg></button></div>
                        <div class="group"><button aria-label="Origin"><svg><use href="#ucsorigin"/></svg></button><button aria-label="Z axis"><svg><use href="#ucsz"/></svg></button><button aria-label="3 point"><svg><use href="#ucs3"/></svg></button></div>
                    </div>
                    <div class="row">
                        <div class="group"><button aria-label="UCS view"><svg><use href="#ucsview"/></svg></button><button class="drop" aria-label="UCS view options"><i class="caret small"></i></button></div>
                        <div class="combo"><svg><use href="#ucs"/></svg><select aria-label="Named UCS"><option>Unnamed</option></select><i class="caret"></i></div>
                    </div>
                </div>
            </div>
            <h2>Coordinates<svg class="launcher" viewBox="0 0 6 6"><path d="M1 1l4 4M5 1v4H1" fill="none" stroke="#333"/></svg></h2>
        </section>

        <section class="panel view">
            <div class="panel-body">
                <div class="rows">
                    <div class="row"><div class="combo"><svg><use href="#xray"/></svg><select aria-label="Visual style"><option>X-Ray</option></select><i class="caret"></i></div></div>
                    <div class="row"><div class="combo"><svg><use href="#saved"/></svg><select aria-label="View"><option>Unsaved View</option></select><i class="caret"></i></div></div>
                    <div class="row"><div class="group"><button aria-label="Viewport"><svg><use href="#viewcube"/></svg></button><button class="drop" aria-label="Viewport options"><i class="caret small"></i></button></div></div>
                </div>
            </div>
            <h2>View<i class="caret"></i></h2>
        </section>

        <section class="panel selection">
            <div class="panel-body">
                <button class="big pressed"><svg><use href="#culling"/></svg>Culling</button>
                <button class="big"><svg><use href="#nofilter"/></svg>No Filter<i class="caret small"></i></button>
                <button class="big"><svg><use href="#gizmo"/></svg>Move Gizmo<i class="caret small"></i></button>
            </div>
            <h2>Selection</h2>
        </section>

        <button class="folded"><svg><use href="#layers"/></svg>Layers<i class="caret"></i></button>
        <button class="folded"><svg><use href="#groups"/></svg>Groups<i class="caret"></i></button>
    </main>

    <section class="viewport">
        <svg class="scene" viewBox="2 150 1275 723" preserveAspectRatio="xMidYMid slice" aria-hidden="true">
            <defs>
                <linearGradient id="dome" x1="0" x2="1"><stop offset="0" stop-color="#858687"/><stop offset="1" stop-color="#979898"/></linearGradient>
                <clipPath id="solid"><path d="M335 391 671 271l370 109v236l-50 17-235-69v153l-51 18-370-108z"/></clipPath>
                <clipPath id="domeclip"><path d="M1277 502c-38 65-55 125-61 208 4 14 30 26 61 28z"/></clipPath>
                <g id="grid" fill="none">
                    <path d="M2 671l1275-457M2 549l1110-399M300 804l977-347M560 873l717-252M2 425l770-275M2 304l430-154M870 873l407-145"/>
                    <path d="M120 150l1157 337M2 225l1275 373M2 333l1275 373M2 441l1275 377M850 150l427 125"/>
                </g>
            </defs>
            <rect x="2" y="150" width="1275" height="723" fill="#212830"/>
            <use href="#grid" stroke="#262e37"/>
            <path d="M2 791 405 648M1042 421l235-83M2 549l1060 324" fill="none" stroke="#323b46"/>
            <path d="M500 150l777 228" stroke="#6b2530"/>

            <!-- walls -->
            <path d="M335 391 671 271l370 109v236l-50 17-235-69v153l-51 18-370-108z" fill="#88898b"/>
            <path d="M335 391 671 271v34l-230 83v33z" fill="#808183"/>
            <path d="M441 388 676 305v153z" fill="#727375"/>
            <path d="M676 305l315 92v236l-315-91z" fill="#8c8d8f"/>
            <path d="M991 397l50-17v236l-50 17z" fill="#7c7d7f"/>
            <path d="M705 499l51-17v235l-51 18z" fill="#7a7b7d"/>
            <path d="M441 388l315 94v82l-80-22-235 83z" fill="#9a9b9a"/>
            <path d="M676 490l29 9v51l-29-8z" fill="#a5a7a5"/>
            <path d="M705 499l51-17v82l-51-14z" fill="#949593"/>

            <g clip-path="url(#solid)" fill="none" stroke="#63666e">
                <path d="M405 647l637-226M336 552l581-208M336 430l397-141M591 701l451-160"/>
                <path d="M612 293l430 125M446 353l596 175M336 430l673 197M336 539l420 123"/>
            </g>

            <g fill="none" stroke="#c5c6c6">
                <path d="M335 627l336-120 370 109M671 271v236M676 457v85M441 388v237l235-83 80 22M441 625l315 92" opacity=".8"/>
            </g>
            <g fill="none" stroke="#fff" shape-rendering="crispEdges">
                <path d="M335 391 671 271l370 109v236l-50 17-235-69M335 391v236l370 108 51-18V482L441 388l235-83 315 92v236M335 391l370 108v236M705 499l51-17M991 397l50-17M676 305v152"/>
                <path d="M705 570l34-11v46l-34 12"/>
            </g>

            <path d="M350 466l80 24M640 550l65 19" stroke="#a1a8a2"/>
            <path d="M705.500 564v11M702 570h8" stroke="#149114"/>

            <path d="M1277 502c-38 65-55 125-61 208 4 14 30 26 61 28z" fill="url(#dome)"/>
            <g clip-path="url(#domeclip)" fill="none" stroke="#63666e"><path d="M1210 579l67 18M1210 600l67-23M1210 686l67 19M1210 721l67-24"/></g>
            <path d="M1277 682c-34 2-61 14-61 28s28 26 61 28" fill="none" stroke="#fff"/>

            <!-- cursor -->
            <path d="M334.500 417v66" stroke="#f08080"/>
            <path d="M300 452l52 15" stroke="#a5f5a0"/>
            <path d="M303 473l48-17" stroke="#8a8be0"/>
            <path d="M325 452v18h19" fill="none" stroke="#0b960b" stroke-width="2"/>

            <!-- axis icon -->
            <g stroke-linecap="round" fill="none">
                <path d="M53 820l32-11" stroke="#3f8a3c" stroke-width="5"/><path d="M53 819l32-11" stroke="#67b060"/>
                <path d="M52 820V777" stroke="#3c6fc4" stroke-width="5"/><path d="M51 818V778" stroke="#7fa9ee"/>
                <path d="M53 821l34 10" stroke="#cc4a4a" stroke-width="5"/><path d="M53 820l34 10" stroke="#ff9a98"/>
            </g>
            <path d="M50 761h12l-12 12h12" fill="none" stroke="#1c5fd0"/>
            <path d="M82 794l6 6 6-6M88 800v6" fill="none" stroke="#169a22"/>
            <path d="M85 816l12 12M97 816l-12 12" stroke="#d83030"/>

            <!-- orientation cube -->
            <ellipse cx="1195" cy="285" rx="57" ry="19" fill="none" stroke="#444b55" stroke-width="15"/>
            <g class="compass">
                <text transform="matrix(.8 .3 -.5 .7 1147 268)">W</text>
                <text transform="matrix(.8 -.2 .5 .7 1228 269)">N</text>
                <text transform="matrix(1 -.5 .8 .6 1144 306)">S</text>
                <text transform="matrix(.7 -.9 1 .4 1240 304)">E</text>
            </g>
            <path d="M1162 233l33-9 35 9-1 44-32 13-34-13z" fill="#b2b3b3"/>
            <path d="M1162 233l33-9 35 9-33 9z" fill="#a3a4a4"/>
            <path d="M1197 242l33-9-1 44-32 13z" fill="#a9aaaa"/>
            <path d="M1162 233l35 9 33-9M1197 242v48" fill="none" stroke="#333" stroke-dasharray="8 3"/>
            <path d="M1162 233l33-9 35 9" fill="none" stroke="#444" stroke-dasharray="3 2"/>
            <path d="M1191 241l6-3 6 3v7l-6 2-6-2z" fill="#9aa4ae" opacity=".7"/>
            <g class="cube-text">
                <text transform="matrix(.1 -1 1 .2 1182 271)">TOP</text>
                <text transform="matrix(.05 -1 1 -.3 1218 278)">FRONT</text>
                <text transform="matrix(-.9 -.25 .9 -.25 1206 236)">BACK</text>
            </g>
        </svg>
        <div class="view-controls"><button>[−]</button><button>[Custom View]</button><button>[X-Ray]</button></div>
        <div class="view-window">
            <button aria-label="Minimize view"><svg viewBox="0 0 12 12"><path d="M1 9h10" stroke="#eee" stroke-width="3"/></svg></button>
            <button aria-label="Restore view"><svg viewBox="0 0 12 12"><path d="M2 4h6v6H2z" fill="none" stroke="#eee" stroke-width="2"/><path d="M4 1h7v7" fill="none" stroke="#eee"/></svg></button>
            <button aria-label="Close view"><svg viewBox="0 0 12 12"><path d="M2 2l8 8M10 2l-8 8" stroke="#eee" stroke-width="2"/></svg></button>
        </div>
        <button class="ucs-menu">Unnamed<svg viewBox="0 0 8 6"><path d="M0 0h8L4 5z" fill="none" stroke="#b4b5c2"/></svg></button>
        <div class="tooltip">Perpendicular</div>
    </section>

    <nav class="layouts">
        <button class="step" aria-label="First"><svg viewBox="0 0 8 8"><path d="M1 0v8" stroke="#555"/><path d="M7 0v8L3 4z" fill="#555"/></svg></button>
        <button class="step" aria-label="Previous"><svg viewBox="0 0 8 8"><path d="M6 0v8L2 4z" fill="#555"/></svg></button>
        <button class="step" aria-label="Next"><svg viewBox="0 0 8 8"><path d="M2 0v8l4-4z" fill="#555"/></svg></button>
        <button class="step" aria-label="Last"><svg viewBox="0 0 8 8"><path d="M7 0v8" stroke="#555"/><path d="M1 0v8l4-4z" fill="#555"/></svg></button>
        <a class="layout active" href="#model">Model</a>
        <a class="layout" href="#layout1">Layout1</a>
        <a class="layout" href="#layout2">Layout2</a>
    </nav>

    <section class="command">
        <div class="grip"></div>
        <div class="command-text">
            <pre class="history">Command: _.erase 1 found
Command: 3DPOLY
Specify start point of polyline:</pre>
            <input class="prompt" type="text" aria-label="Command line" value="Specify endpoint of line or [Undo]:">
        </div>
    </section>

    <footer class="status">
        <div class="coords"><span>0.0000,</span><span>20.0000 , 0.0000</span></div>
        <button>INFER</button>
        <button>SNAP</button>
        <button class="on">GRID</button>
        <button class="on">ORTHO</button>
        <button>POLAR</button>
        <button class="on">OSNAP</button>
        <button class="on">3DOSNAP</button>
        <button class="on">OTRACK</button>
        <button class="on">DUCS</button>
        <button class="on">DYN</button>
        <button>LWT</button>
        <button>TPY</button>
        <button>QP</button>
        <button class="on">SC</button>
        <div class="spacer"></div>
        <button class="wide">MODEL</button>
        <button aria-label="Model space"><svg><use href="#st-model"/></svg></button>
        <button aria-label="Quick view"><svg><use href="#st-quick"/></svg></button>
        <div class="gap"></div>
        <button class="scale"><svg><use href="#st-scale"/></svg>1:1<i class="caret dark"></i></button>
        <button aria-label="Annotation visibility"><svg><use href="#st-vis"/></svg></button>
        <button aria-label="Annotation auto scale"><svg><use href="#st-auto"/></svg></button>
        <div class="gap"></div>
        <button aria-label="Workspace switching"><svg><use href="#gear"/></svg></button>
        <button aria-label="Lock toolbars"><svg><use href="#st-lock"/></svg></button>
        <button aria-label="Hardware acceleration"><svg><use href="#st-chip"/></svg></button>
        <button class="held" aria-label="Performance"><svg><use href="#st-perf"/></svg></button>
        <button class="held" aria-label="Isolate objects"><svg><use href="#st-bulb"/></svg></button>
        <div class="gap"></div>
        <button class="thin" aria-label="Status bar menu"><i class="caret small dark"></i></button>
        <button aria-label="Clean screen"><svg><use href="#st-clean"/></svg></button>
    </footer>

    <footer class="taskbar">
        <button class="start" aria-label="Start"><svg><use href="#start"/></svg></button>
        <button class="pinned" aria-label="Internet Explorer"><svg><use href="#ie"/></svg></button>
        <button class="task"><svg><use href="#chrome"/></svg><span>Aula.bg - Questio...</span></button>
        <button class="task"><svg><use href="#skype"/></svg><span>Skype™ - pepita_6...</span></button>
        <button class="task"><svg><use href="#folder"/></svg><span>Modul 1</span></button>
        <button class="task current"><svg><use href="#acadfile"/></svg><span>AutoCAD 2012 - [...</span></button>
        <div class="tray">
            <span class="lang">EN</span>
            <svg><use href="#t-kbd"/></svg>
            <svg class="apart"><use href="#t-phone"/></svg>
            <svg><use href="#t-java"/></svg>
            <svg><use href="#t-sound"/></svg>
            <svg><use href="#t-warn"/></svg>
            <svg><use href="#t-vol"/></svg>
            <svg><use href="#t-net"/></svg>
            <svg><use href="#t-ok"/></svg>
            <div class="clock">10:35<br>13.11.2015 г.</div>
            <button class="show-desktop" aria-label="Show desktop"></button>
        </div>
    </footer>
</div>
</body>
</html>
```
FILE: styles.css
```css
body {
    margin: 0;
    font: 11px "Noto Sans", "Open Sans", sans-serif;
    color: #333;
    background: #666;
}

button, select, input {
    margin: 0;
    padding: 0;
    border: 0;
    background: none;
    font: inherit;
    color: inherit;
}

button {
    display: flex;
    align-items: center;
    justify-content: center;
}

a {
    color: inherit;
    text-decoration: none;
}

svg {
    display: block;
    flex: none;
}

.sprite {
    position: absolute;
    width: 0;
    height: 0;
}

.app {
    min-height: 100vh;
    display: flex;
    flex-direction: column;
}

/* Drop-down arrows */
.caret {
    flex: none;
    width: 0;
    height: 0;
    border: 4px solid transparent;
    border-top-color: #444;
    border-bottom: 0;
}

.caret.small {
    border-width: 3px;
    border-bottom: 0;
}

.caret.dark {
    border-top-color: #000;
}

.caret.light {
    border-top-color: #eee;
}

.caret-right {
    border: 4px solid transparent;
    border-left-color: #000;
    border-right: 0;
    margin-right: 5px;
}

/* Title bar and ribbon tabs */
.top {
    display: grid;
    grid-template-columns: 41px 1fr;
    grid-template-rows: 24px 20px;
    background: #3f3f3f;
}

.app-button {
    grid-row: 1 / 3;
    height: 41px;
    border: 1px solid #222;
    background: linear-gradient(#888, #bbb);
}

.app-logo {
    width: 30px;
    height: 34px;
}

.titlebar {
    display: flex;
    align-items: center;
    padding-left: 5px;
    background: linear-gradient(#5a5a5a, #8c8c8c 80%, #777);
    border-bottom: 1px solid #333;
    box-sizing: border-box;
}

.quick {
    width: 24px;
}

.quick svg, .info svg, .sign-in svg {
    width: 18px;
    height: 16px;
}

.quick.with-caret {
    width: 36px;
    gap: 6px;
}

.combo {
    flex: 1;
    display: flex;
    align-items: center;
    gap: 2px;
    height: 20px;
    padding: 0 3px;
    border: 1px solid #ccc;
    background: linear-gradient(#fafafa, #ededed);
}

.combo svg {
    width: 16px;
    height: 16px;
}

.combo select {
    flex: 1;
    min-width: 0;
    appearance: none;
    outline: none;
}

.workspace {
    flex: 0 0 170px;
    height: 18px;
    border-color: #aaa;
    background: #bdbdbd;
    color: #666;
    font-size: 12px;
}

.quick-menu {
    width: 16px;
    flex-direction: column;
    gap: 1px;
}

.quick-menu .bar {
    width: 8px;
    height: 1px;
    background: #000;
}

.window-title {
    flex: 1;
    display: flex;
    justify-content: center;
    gap: 13px;
    color: #fff;
}

.search {
    width: 178px;
    height: 20px;
    box-sizing: border-box;
    padding: 1px 2px 0;
    background: #f2f2f2;
    border: 1px solid #999;
}

.search::placeholder {
    color: #666;
    font-style: italic;
}

.info {
    width: 26px;
}

.sign-in {
    width: 118px;
    justify-content: flex-start;
    gap: 4px;
    color: #fff;
}

.sign-in .caret {
    margin-left: auto;
    margin-right: 4px;
}

.help {
    width: 50px;
    gap: 6px;
    margin-left: 4px;
    border-left: 1px solid #999;
}

.window-buttons {
    display: flex;
    gap: 4px;
    margin: 0 4px 0 13px;
}

.window-buttons svg, .view-window svg {
    width: 12px;
    height: 12px;
}

.tabs {
    display: flex;
    gap: 1px;
    padding: 3px 0 0 4px;
    color: #fff;
    line-height: 16px;
}

.tab {
    padding: 0 10px;
}

.tab.active {
    padding: 0 11px;
    color: #222;
    background: linear-gradient(#ddd, #fff);
}

.collapse {
    margin-left: 21px;
    gap: 6px;
}

.collapse svg {
    width: 14px;
    height: 8px;
}

/* Ribbon */
.ribbon {
    display: flex;
    height: 98px;
    padding-left: 2px;
    background: linear-gradient(#d0d0d0, #808080);
    border-bottom: 1px solid #f2f2f2;
}

.panel {
    display: flex;
    flex-direction: column;
    box-sizing: border-box;
    background: #fff;
    border-right: 2px solid #b5b5b5;
}

.modeling { width: 157px; }
.mesh { width: 79px; }
.editing { width: 95px; }
.draw { width: 93px; }
.modify { width: 145px; }
.section { width: 76px; }
.coordinates { width: 145px; }
.view { width: 127px; }
.selection { width: 205px; }

.panel-body {
    flex: 1;
    min-height: 0;
    display: flex;
    justify-content: space-between;
    padding: 6px 2px 0;
}

.modeling .panel-body {
    padding: 6px 1px 0 4px;
}

.panel h2 {
    flex: none;
    display: flex;
    align-items: center;
    justify-content: center;
    gap: 7px;
    margin: 0 1px;
    padding-bottom: 2px;
    height: 16px;
    background: #eee;
    border-top: 1px solid #ddd;
    font-size: 11px;
    font-weight: normal;
}

.launcher {
    width: 6px;
    height: 6px;
}

.mesh h2, .coordinates h2 {
    justify-content: space-between;
    padding-right: 3px;
}

.mesh h2::before, .coordinates h2::before {
    content: "";
    width: 6px;
}

.big {
    flex: 1;
    display: block;
    align-self: flex-start;
    line-height: 15px;
    white-space: nowrap;
    text-align: center;
}

.big svg {
    width: 32px;
    height: 32px;
    margin: 2px auto 3px;
}

.big .caret {
    display: block;
    width: 0;
    margin: 3px auto 0;
}

.selection .panel-body {
    padding: 5px 6px 3px 1px;
}

.selection .big {
    flex: auto;
}

.selection .pressed {
    flex: 0 0 44px;
    display: flex;
    flex-direction: column;
    justify-content: flex-start;
    align-self: stretch;
    background: #b4d4f2;
    border: 1px solid #2a6cab;
    box-sizing: border-box;
}

.rows {
    flex: none;
    display: flex;
    flex-direction: column;
    gap: 2px;
}

.view .rows {
    flex: 1;
}

.row {
    display: flex;
    gap: 4px;
}

.group {
    display: flex;
    border: 1px solid #ccc;
    background: linear-gradient(#fafafa, #ededed);
}

.group button {
    width: 23px;
    height: 20px;
}

.group button + button {
    border-left: 1px solid #ddd;
}

.group .drop {
    width: 12px;
}

.group svg {
    width: 20px;
    height: 20px;
}

.folded {
    flex-direction: column;
    justify-content: flex-start;
    width: 61px;
    box-sizing: border-box;
    padding: 6px 0;
    background: linear-gradient(#fff, #eee);
    border-right: 2px solid #b5b5b5;
}

.folded svg {
    width: 32px;
    height: 32px;
    margin-bottom: 3px;
}

.folded .caret {
    margin-top: auto;
}

/* Drawing area */
.viewport {
    position: relative;
    flex: 1;
    min-height: 400px;
    margin-top: 7px;
    border-left: 2px solid #999;
    border-right: 2px solid #eee;
    background: #212830;
}

.scene {
    position: absolute;
    width: 100%;
    height: 100%;
}

.compass {
    font: bold 14px "Noto Sans", sans-serif;
    fill: #b9bcc0;
}

.cube-text {
    font: bold 10px "Noto Sans", sans-serif;
    fill: #43474b;
}

.view-controls {
    position: absolute;
    top: 5px;
    left: 4px;
    display: flex;
    gap: 5px;
    color: #fff;
}

.view-window {
    position: absolute;
    top: 8px;
    right: 9px;
    display: flex;
    gap: 8px;
}

.ucs-menu {
    position: absolute;
    top: 192px;
    right: 48px;
    width: 68px;
    height: 18px;
    gap: 6px;
    border: 1px solid #9a9ba8;
    border-radius: 3px;
    background: #858694;
    color: #c6c7d0;
    font-size: 10px;
}

.ucs-menu svg {
    width: 8px;
    height: 6px;
}

.tooltip {
    position: absolute;
    top: 334px;
    left: 354px;
    padding: 1px 8px 1px 4px;
    border: 1px solid #000;
    background: #989497;
    color: #111;
    line-height: 16px;
}

/* Layout tabs */
.layouts {
    display: flex;
    height: 16px;
    margin-left: 2px;
    background: #f0f0f0;
    font: 11px/17px "Liberation Sans", sans-serif;
    color: #111;
}

.step {
    width: 15px;
    border-right: 1px solid #aaa;
}

.step svg {
    width: 8px;
    height: 8px;
}

.layout {
    display: flex;
    gap: 7px;
    padding-left: 7px;
}

.layout::after {
    content: "";
    width: 1px;
    background: #444;
    transform: skewX(-20deg);
}

.layout.active {
    padding: 0 6px 0 11px;
    background: #2b2b2b;
    color: #fff;
    clip-path: polygon(0 0, 100% 0, 90% 100%, 12% 100%);
}

/* Command window */
.command {
    display: flex;
    margin-top: 4px;
    background: #999;
}

.grip {
    width: 12px;
    height: 4px;
    margin: 4px 2px;
    background: repeating-linear-gradient(90deg, #333 0 1px, transparent 1px 2px);
}

.command-text {
    flex: 1;
    background: #fff;
    color: #000;
    font: 13px/13px "Liberation Mono", monospace;
}

.history {
    margin: 0;
    padding: 2px 1px 11px;
    font: inherit;
    border-bottom: 1px solid #aaa;
}

.prompt {
    width: 100%;
    box-sizing: border-box;
    height: 16px;
    padding: 2px 1px 0;
    outline: none;
}

/* Drafting status bar */
.status {
    display: flex;
    height: 22px;
    border-top: 1px solid #111;
    box-sizing: border-box;
    background: linear-gradient(#777, #8c8c8c);
    color: #111;
    font: 12px Roboto, sans-serif;
}

.status button {
    padding: 0 2px;
    background: linear-gradient(#c4c4c4, #9c9c9c);
    border-right: 1px solid #444;
}

.status button.on {
    background: linear-gradient(#c9e6ee 50%, #93c9d8 50%, #b5e4ee);
}

.status button svg {
    width: 18px;
    height: 18px;
}

.coords {
    width: 160px;
    padding-left: 12px;
    display: flex;
    gap: 10px;
    align-items: center;
    font-size: 11px;
    border-right: 1px solid #444;
}

.spacer {
    flex: 1;
}

.gap {
    width: 6px;
    background: #666;
}

.status .wide {
    padding: 0 3px;
}

.status .scale {
    gap: 3px;
    width: 52px;
}

.status .held {
    background: #8b8b8b;
}

.status .thin {
    width: 13px;
}

/* Windows taskbar */
.taskbar {
    display: flex;
    align-items: center;
    gap: 4px;
    height: 40px;
    background: #8294ab;
    border-top: 1px solid #5d6b7e;
    box-sizing: border-box;
    color: #fff;
}

.start {
    width: 54px;
}

.start svg {
    width: 38px;
    height: 38px;
}

.pinned {
    width: 60px;
}

.pinned svg {
    width: 34px;
    height: 32px;
}

.task {
    width: 158px;
    height: 38px;
    box-sizing: border-box;
    justify-content: flex-start;
    gap: 4px;
    padding: 0 8px;
    border: 1px solid #46566b;
    border-radius: 3px;
    box-shadow: inset 0 0 0 1px #b5c1d0;
    background: linear-gradient(165deg, #a5b2c4 35%, #8494aa 50%);
    white-space: nowrap;
}

.task svg {
    width: 32px;
    height: 32px;
}

.task.current {
    background: linear-gradient(165deg, #c5ceda 35%, #a9b5c5 50%);
}

.tray {
    margin-left: auto;
    display: flex;
    align-items: center;
    gap: 8px;
}

.tray svg {
    width: 16px;
    height: 16px;
}

.tray .apart {
    margin-left: 4px;
}

.clock {
    margin-left: 2px;
    text-align: center;
    line-height: 17px;
}

.show-desktop {
    width: 13px;
    height: 39px;
    border: 1px solid #3f4f63;
    background: linear-gradient(135deg, #a5b5c7, #66788f);
}
```
